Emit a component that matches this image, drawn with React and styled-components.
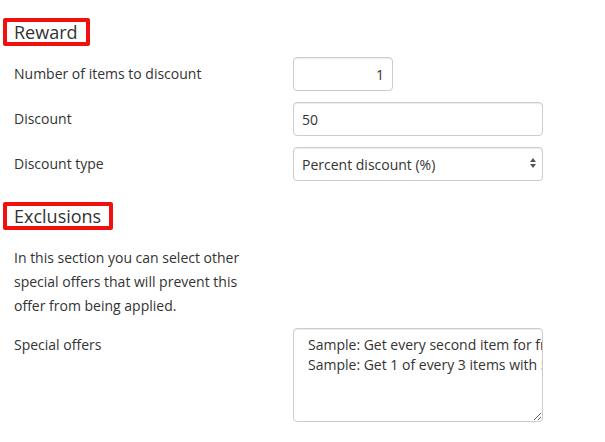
import React from 'react'
import styled, { createGlobalStyle } from 'styled-components'

const GlobalStyle = createGlobalStyle`
    html, body {
        margin: 0;
        padding: 0;
        background: #fff;
    }

    body {
        font-family: "Open Sans", "Liberation Sans", sans-serif;
        font-size: 14px;
        color: #333;
    }
`;

const Page = styled.div`
    padding: 18px 0 0 14px;
    box-sizing: border-box;
    width: 605px;
`;

const Section = styled.section`
    padding-bottom: 10px;
`;

const Heading = styled.h3`
    display: block;
    width: fit-content;
    margin: 0 0 11px -11px;
    padding: 0 8px 0 7px;
    border: 4px solid #f2100f;
    border-radius: 2px;
    font-size: 18px;
    font-weight: 400;
    line-height: 20px;
    color: #333;
`;

const Row = styled.div`
    display: grid;
    grid-template-columns: 279px 250px;
    align-items: start;
    margin-bottom: 11px;
`;

const Label = styled.label`
    padding-top: 7px;
    line-height: 20px;
`;

const Description = styled.p`
    width: 255px;
    margin: 16px 0 11px;
    line-height: 1.7;
`;

const controlStyle = `
    box-sizing: border-box;
    height: 34px;
    padding: 0 8px;
    border: 1px solid #ccc;
    border-radius: 4px;
    background: #fff;
    box-shadow: inset 0 1px 1px rgba(0, 0, 0, .075);
    font-family: inherit;
    font-size: 14px;
    color: #333;
    outline: none;
`;

const TextInput = styled.input`
    ${controlStyle}
    width: ${props => props.$width || '100%'};
    text-align: ${props => props.$align || 'left'};
`;

const SelectWrap = styled.div`
    position: relative;
    width: 100%;

    svg {
        position: absolute;
        right: 7px;
        top: 11px;
        pointer-events: none;
    }
`;

const Select = styled.select`
    ${controlStyle}
    width: 100%;
    padding-right: 24px;
    appearance: none;
    -webkit-appearance: none;
`;

const OfferList = styled.textarea`
    ${controlStyle}
    width: 100%;
    height: 94px;
    padding: 6px 12px 6px 14px;
    line-height: 20px;
    white-space: pre;
    overflow: hidden;
    resize: vertical;
`;

const offers = [
    'Sample: Get every second item for free',
    'Sample: Get 1 of every 3 items with 50% off',
];

function UpDownArrows() {
    return (
        <svg width="6" height="10" viewBox="0 0 6 10">
            <path d="M3 0 L6 4 L0 4 Z" fill="#555" />
            <path d="M3 10 L6 6 L0 6 Z" fill="#555" />
        </svg>
    )
}

export default function App() {
    return (
        <Page>
            <GlobalStyle />

            <Section>
                <Heading>Reward</Heading>
                <Row>
                    <Label>Number of items to discount</Label>
                    <TextInput $width="100px" $align="right" defaultValue="1" />
                </Row>
                <Row>
                    <Label>Discount</Label>
                    <TextInput defaultValue="50" />
                </Row>
                <Row>
                    <Label>Discount type</Label>
                    <SelectWrap>
                        <Select defaultValue="percent">
                            <option value="percent">Percent discount (%)</option>
                            <option value="fixed">Fixed discount</option>
                        </Select>
                        <UpDownArrows />
                    </SelectWrap>
                </Row>
            </Section>

            <Section>
                <Heading>Exclusions</Heading>
                <Description>
                    In this section you can select other special offers that will prevent this offer from being applied.
                </Description>
                <Row>
                    <Label>Special offers</Label>
                    <OfferList wrap="off" readOnly defaultValue={offers.join('\n')} />
                </Row>
            </Section>
        </Page>
    )
}
